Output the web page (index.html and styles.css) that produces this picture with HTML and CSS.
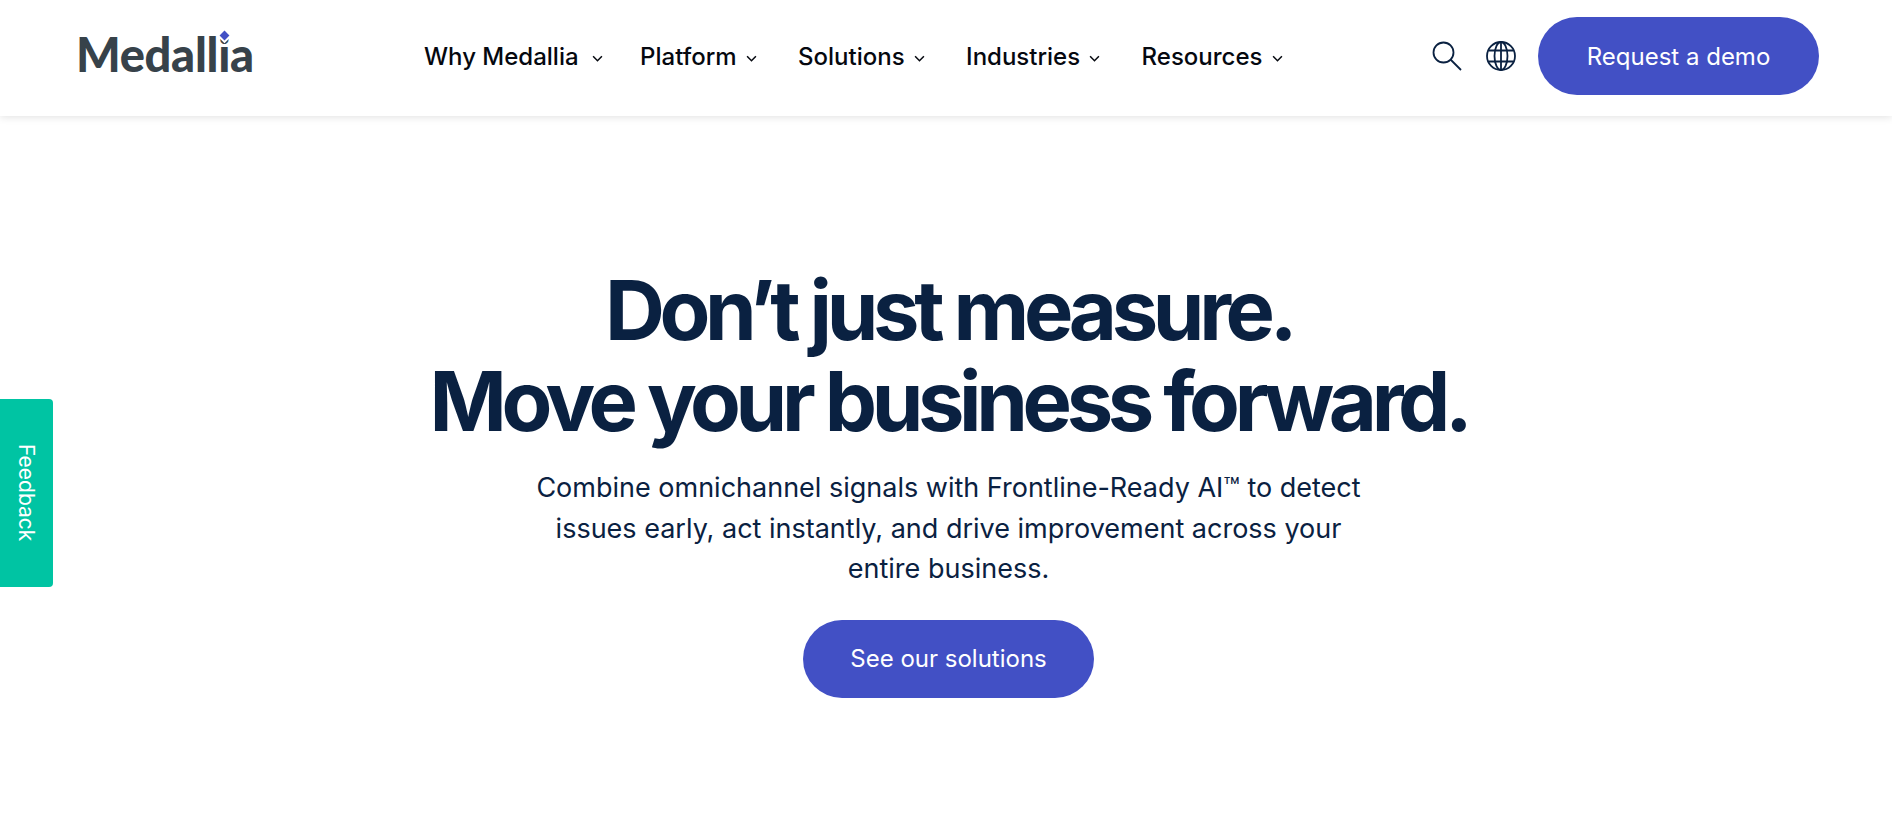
FILE: index.html
```html
<!DOCTYPE html>
<html lang="en">
<head>
  <meta charset="UTF-8">
  <meta name="viewport" content="width=device-width, initial-scale=1.0">
  <title>Medallia</title>
  <link rel="stylesheet" href="styles.css">
</head>
<body>
  <header class="site-header">
    <a class="logo" href="#">Medall<span class="logo-i">i<span class="logo-dot"></span></span>a</a>

    <nav class="main-nav">
      <a class="nav-item nav-item-first" href="#">Why Medallia
        <svg class="chevron" viewBox="0 0 10 6"><path d="M1 1l4 4 4-4"/></svg>
      </a>
      <a class="nav-item" href="#">Platform
        <svg class="chevron" viewBox="0 0 10 6"><path d="M1 1l4 4 4-4"/></svg>
      </a>
      <a class="nav-item" href="#">Solutions
        <svg class="chevron" viewBox="0 0 10 6"><path d="M1 1l4 4 4-4"/></svg>
      </a>
      <a class="nav-item" href="#">Industries
        <svg class="chevron" viewBox="0 0 10 6"><path d="M1 1l4 4 4-4"/></svg>
      </a>
      <a class="nav-item" href="#">Resources
        <svg class="chevron" viewBox="0 0 10 6"><path d="M1 1l4 4 4-4"/></svg>
      </a>
    </nav>

    <div class="header-actions">
      <svg class="icon icon-search" viewBox="0 0 30 30">
        <circle cx="11.5" cy="11.5" r="10"/>
        <path d="M18.5 18.5L29 29"/>
      </svg>
      <svg class="icon icon-globe" viewBox="0 0 30 30">
        <circle cx="15" cy="15" r="14"/>
        <ellipse cx="15" cy="15" rx="6.5" ry="14"/>
        <path d="M15 1v28M2.5 9.5h25M2.5 20.5h25"/>
      </svg>
      <a class="btn btn-demo" href="#">Request a demo</a>
    </div>
  </header>

  <main class="hero">
    <h1>Don’t just measure.<br>Move your business forward.</h1>
    <p class="hero-text">Combine omnichannel signals with Frontline-Ready AI™ to detect issues early, act instantly, and drive improvement across your entire business.</p>
    <a class="btn btn-hero" href="#">See our solutions</a>
  </main>

  <a class="feedback-tab" href="#"><span>Feedback</span></a>
</body>
</html>
```

FILE: styles.css
```css
:root {
  --primary-color: #4250c5;
  --navy: #0a2141;
  --text-color: #05080f;
  --logo-color: #37424a;
  --teal: #00c4a3;
}

* {
  box-sizing: border-box;
  margin: 0;
  padding: 0;
}

body {
  font-family: 'Inter', Arial, sans-serif;
  color: var(--text-color);
  background-color: #fff;
  height: 830px;
  overflow: hidden;
}

a {
  text-decoration: none;
  color: inherit;
}

.site-header {
  height: 116px;
  display: flex;
  align-items: center;
  padding: 0 73px 4px 76px;
  background: #fff;
  box-shadow: 0 1px 8px rgba(0, 0, 0, 0.12);
}

.logo {
  font-family: 'Lato', Arial, sans-serif;
  font-size: 47px;
  font-weight: 900;
  letter-spacing: -0.3px;
  color: var(--logo-color);
  width: 348px;
  line-height: 1;
  margin-top: -4px;
}

.logo-i {
  position: relative;
}

/* diamond sits on the i, white ring hides the font's own tittle */
.logo-dot {
  position: absolute;
  left: 50%;
  top: 6px;
  width: 7px;
  height: 7px;
  margin-left: -3px;
  background: var(--primary-color);
  box-shadow: 0 0 0 2px #fff;
  transform: rotate(45deg);
}

.main-nav {
  display: flex;
  align-items: center;
  gap: 41.5px;
  font-size: 24px;
  font-weight: 500;
}

.nav-item {
  display: flex;
  align-items: center;
  gap: 9px;
}

.nav-item-first {
  gap: 13px;
  margin-right: -4px;
}

.chevron {
  width: 11px;
  height: 7px;
  margin-top: 4px;
  fill: none;
  stroke: var(--text-color);
  stroke-width: 1.4;
}

.header-actions {
  margin-left: auto;
  display: flex;
  align-items: center;
}

.icon {
  width: 30px;
  height: 30px;
  fill: none;
  stroke: var(--navy);
  stroke-width: 1.8;
}

.icon-search {
  margin-right: 24px;
}

.icon-globe {
  margin-right: 22px;
}

.btn {
  display: flex;
  align-items: center;
  justify-content: center;
  background-color: var(--primary-color);
  color: #fff;
  border-radius: 39px;
  font-size: 24px;
}

.btn-demo {
  width: 281px;
  height: 78px;
}

.hero {
  display: flex;
  flex-direction: column;
  align-items: center;
  padding: 149px 0 0 5px;
  text-align: center;
}

h1 {
  color: var(--navy);
  font-size: 83px;
  font-weight: 650;
  line-height: 91px;
  letter-spacing: -5.35px;
}

.hero-text {
  width: 830px;
  margin-top: 21px;
  font-size: 27px;
  line-height: 40.5px;
  color: var(--navy);
}

.btn-hero {
  width: 291px;
  height: 78px;
  margin-top: 30px;
}

.feedback-tab {
  position: absolute;
  left: 0;
  top: 399px;
  width: 53px;
  height: 188px;
  display: flex;
  align-items: center;
  justify-content: center;
  background-color: var(--teal);
  border-radius: 0 4px 4px 0;
  color: #fff;
  font-size: 21px;
}

.feedback-tab span {
  writing-mode: vertical-rl;
}
```
